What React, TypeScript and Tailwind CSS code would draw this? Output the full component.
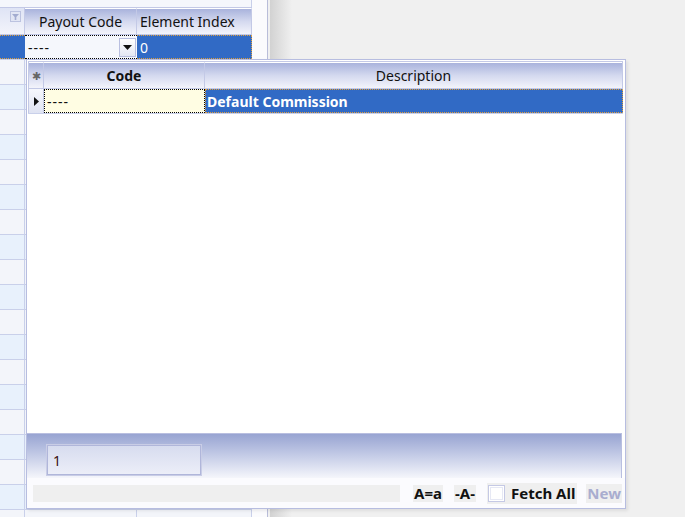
import React from "react";

const font = { fontFamily: '"Noto Sans", "Open Sans", sans-serif' };

const HeaderCell = ({ w, children, bold }: { w: string; children?: React.ReactNode; bold?: boolean }) => (
  <div
    className={`${w} shrink-0 h-full flex items-center justify-center border-r border-[#c3c9e6] bg-gradient-to-b from-[#a9b3dc] via-[#d4d9ef] to-[#f3f4fb] border-t border-t-white ${bold ? "font-bold" : ""}`}
  >
    {children}
  </div>
);

const GridRow = ({ tone }: { tone: string }) => (
  <div className={`flex shrink-0 h-[25px] border-b border-[#c9d0ea] ${tone}`}>
    <div className="w-[25px] border-r border-[#c9d0ea]" />
    <div className="w-[112px] border-r border-[#c9d0ea]" />
    <div className="w-[115px] border-r border-[#c9d0ea]" />
  </div>
);

export default function App() {
  const tones = ["bg-[#f3f5fa]", "bg-[#e8f1fc]"];
  const rows = Array.from({ length: 19 }, (_, i) => tones[i % 2]);

  return (
    <div className="relative w-[685px] h-[517px] overflow-hidden bg-[#f0f0f0] flex text-[14px] text-[#111]" style={font}>
      {/* background grid */}
      <div className="w-[268px] shrink-0 h-full overflow-hidden bg-[#fbfbfd] border-r border-[#b9bdd9] flex flex-col">
        <div className="h-[7px] shrink-0 w-[252px] border-r border-[#c9d0ea] bg-[#f5f7fc]" />
        <div className="flex h-[28px] w-[252px] border-y border-[#c3c9e6] shrink-0">
          <div className="w-[25px] shrink-0 h-full flex items-start justify-end pt-[3px] pr-[3px] border-r border-[#c3c9e6] bg-gradient-to-b from-[#dfe4f5] to-[#f3f4fb]">
            <div className="w-[11px] h-[11px] border border-[#bcc3e0] bg-[#e2e6f4] flex items-center justify-center">
              <svg width="7" height="6" viewBox="0 0 7 6">
                <path d="M0 0h7L4.3 3V6H2.7V3z" fill="#a3acd0" />
              </svg>
            </div>
          </div>
          <HeaderCell w="w-[112px]">Payout Code</HeaderCell>
          <div className="w-[115px] shrink-0 h-full flex items-center pl-[3px] border-r border-[#c3c9e6] bg-gradient-to-b from-[#a9b3dc] via-[#d4d9ef] to-[#f3f4fb] border-t border-t-white">
            Element Index
          </div>
        </div>
        <div className="flex h-[25px] w-[252px] shrink-0 border-b border-[#c9d0ea]">
          <div className="w-[25px] bg-[#316ac5] border-y border-dotted border-[#e0a040]" />
          <div className="w-[112px] bg-[#f5f7fc] border-y border-dotted border-black flex items-center justify-between pl-[3px] pr-[1px]">
            <span className="tracking-[1px]">----</span>
            <div className="w-[17px] h-[19px] border border-[#b9bfe0] bg-gradient-to-b from-[#ffffff] to-[#e3e6f3] flex items-center justify-center">
              <svg width="9" height="5" viewBox="0 0 9 5">
                <path d="M0 0h9L4.5 5z" fill="#111" />
              </svg>
            </div>
          </div>
          <div className="w-[115px] bg-[#316ac5] text-white flex items-center pl-[3px] border-y border-r border-dotted border-[#e0a040]">0</div>
        </div>
        <div className="w-[252px] flex flex-col shrink-0">
          {rows.map((t, i) => (
            <GridRow key={i} tone={t} />
          ))}
        </div>
      </div>
      <div className="w-[22px] h-full bg-gradient-to-r from-[#d2d2d2] to-[#f0f0f0] ml-[2px]" />

      {/* dropdown popup */}
      <div className="absolute left-[26px] top-[59px] w-[600px] h-[450px] border border-[#b7bde0] bg-white flex flex-col shadow-[2px_2px_3px_rgba(0,0,0,0.08)]">
        <div className="pt-[1px] pl-[1px] pr-[2px] flex flex-col flex-1">
          <div className="flex h-[28px] border border-[#c3c9e6] shrink-0">
            <HeaderCell w="w-[15px]">
              <span className="text-[11px] text-[#666] leading-none">✱</span>
            </HeaderCell>
            <HeaderCell w="w-[161px]" bold>
              Code
            </HeaderCell>
            <div className="flex-1 h-full flex items-center justify-center bg-gradient-to-b from-[#a9b3dc] via-[#d4d9ef] to-[#f3f4fb] border-t border-t-white">
              Description
            </div>
          </div>
          <div className="flex h-[25px] shrink-0 border-b border-[#c9d0ea]">
            <div className="w-[16px] border-x border-[#c3c9e6] bg-gradient-to-b from-[#f6f7fc] to-[#dfe3f2] flex items-center justify-center">
              <svg width="5" height="9" viewBox="0 0 5 9">
                <path d="M0 0L5 4.5L0 9z" fill="#111" />
              </svg>
            </div>
            <div className="w-[161px] bg-[#fffde3] border border-dotted border-black flex items-center pl-[2px]">
              <span className="tracking-[1px]">----</span>
            </div>
            <div className="flex-1 bg-[#316ac5] text-white font-bold flex items-center pl-[1px] border border-dotted border-[#e0a040]">
              Default Commission
            </div>
          </div>
          <div className="flex-1" />
        </div>
        <div className="h-[45px] shrink-0 border-t border-[#b9bfe0] mr-[3px] border-r bg-gradient-to-b from-[#98a4d2] to-[#f5f6fb] flex items-center pl-[19px]">
          <div className="w-[156px] h-[32px] mt-[8px] border-2 border-[#c9cde6] outline outline-1 outline-[#b0b6da] -outline-offset-2 bg-gradient-to-b from-[#d7dcef] to-[#eceef8] flex items-center pl-[5px] text-[#3a1010]">
            1
          </div>
        </div>
        <div className="h-[30px] shrink-0 bg-[#fbfbfe] flex items-center pl-[6px] font-bold text-[15px]">
          <div className="w-[367px] h-[17px] bg-[#efefef]" />
          <div className="ml-[13px] h-[17px] px-[1px] bg-[#efefef] flex items-center">A=a</div>
          <div className="ml-[11px] h-[17px] px-[1px] bg-[#efefef] flex items-center">-A-</div>
          <div className="ml-[11px] h-[21px] bg-[#efefef] flex items-center pr-[2px]">
            <div className="w-[17px] h-[17px] border border-[#c5c9e5] bg-white ml-[1px] p-[1px]">
              <div className="w-full h-full border border-[#e6e8f4]" />
            </div>
            <span className="ml-[6px]">Fetch All</span>
          </div>
          <div className="ml-[9px] h-[19px] px-[1px] bg-[#efefef] text-[#a9adcf] flex items-center">New</div>
        </div>
      </div>
    </div>
  );
}
